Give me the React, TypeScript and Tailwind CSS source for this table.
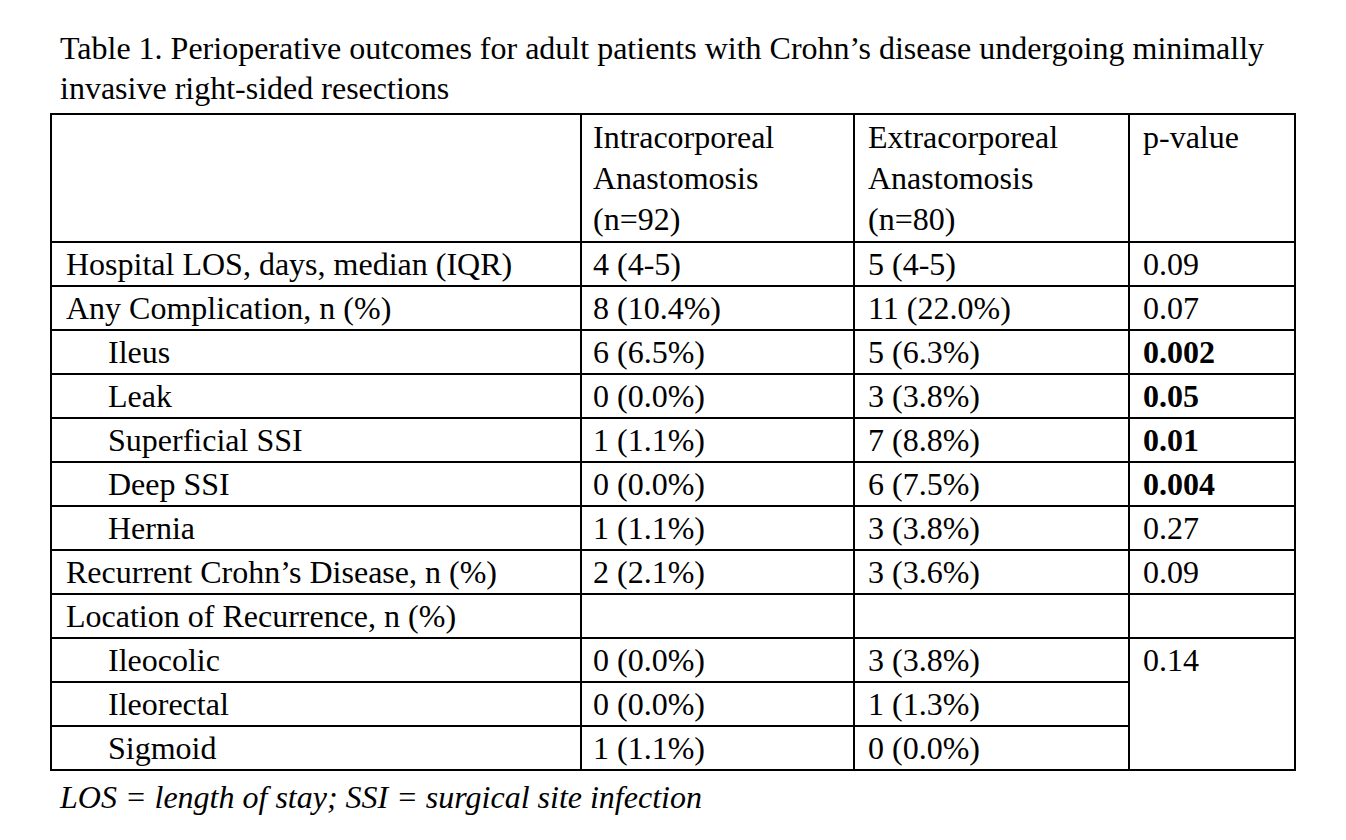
import React from "react";

type Row = {
  label: string;
  indent?: boolean;
  a: string;
  b: string;
  p?: string;
  bold?: boolean;
  pRowSpan?: number;
  skipP?: boolean;
};

const rows: Row[] = [
  { label: "Hospital LOS, days, median (IQR)", a: "4 (4-5)", b: "5 (4-5)", p: "0.09" },
  { label: "Any Complication, n (%)", a: "8 (10.4%)", b: "11 (22.0%)", p: "0.07" },
  { label: "Ileus", indent: true, a: "6 (6.5%)", b: "5 (6.3%)", p: "0.002", bold: true },
  { label: "Leak", indent: true, a: "0 (0.0%)", b: "3 (3.8%)", p: "0.05", bold: true },
  { label: "Superficial SSI", indent: true, a: "1 (1.1%)", b: "7 (8.8%)", p: "0.01", bold: true },
  { label: "Deep SSI", indent: true, a: "0 (0.0%)", b: "6 (7.5%)", p: "0.004", bold: true },
  { label: "Hernia", indent: true, a: "1 (1.1%)", b: "3 (3.8%)", p: "0.27" },
  { label: "Recurrent Crohn’s Disease, n (%)", a: "2 (2.1%)", b: "3 (3.6%)", p: "0.09" },
  { label: "Location of Recurrence, n (%)", a: "", b: "", p: "" },
  { label: "Ileocolic", indent: true, a: "0 (0.0%)", b: "3 (3.8%)", p: "0.14", pRowSpan: 3 },
  { label: "Ileorectal", indent: true, a: "0 (0.0%)", b: "1 (1.3%)", skipP: true },
  { label: "Sigmoid", indent: true, a: "1 (1.1%)", b: "0 (0.0%)", skipP: true },
];

export default function App() {
  return (
    <div
      className="min-h-[840px] w-[1346px] bg-white text-black text-[32px]"
      style={{ fontFamily: '"Liberation Serif", "Times New Roman", serif' }}
    >
      <div className="pl-[60px] pt-[28px] leading-[40px]">
        <p>Table 1. Perioperative outcomes for adult patients with Crohn’s disease undergoing minimally</p>
        <p>invasive right-sided resections</p>
      </div>
      <table className="ml-[50px] mt-[5px] w-[1244px] table-fixed border-collapse border-2 border-black">
        <colgroup>
          <col className="w-[530px]" />
          <col className="w-[273px]" />
          <col className="w-[275px]" />
          <col className="w-[166px]" />
        </colgroup>
        <tbody>
          <tr className="h-[128px] align-top leading-[41px]">
            <td className="border-2 border-black"></td>
            <td className="border-2 border-black pl-[11px] pt-[2px]">
              Intracorporeal<br />Anastomosis<br />(n=92)
            </td>
            <td className="border-2 border-black pl-[13px] pt-[2px]">
              Extracorporeal<br />Anastomosis<br />(n=80)
            </td>
            <td className="border-2 border-black pl-[13px] pt-[2px]">p-value</td>
          </tr>
          {rows.map((r, i) => (
            <tr key={i} className="h-[44px] leading-[42px]">
              <td className={`border-2 border-black p-0 align-top ${r.indent ? "pl-[56px]" : "pl-[14px]"}`}>
                {r.label}
              </td>
              <td className="border-2 border-black p-0 pl-[11px] align-top">{r.a}</td>
              <td className="border-2 border-black p-0 pl-[13px] align-top">{r.b}</td>
              {!r.skipP && (
                <td
                  rowSpan={r.pRowSpan}
                  className={`border-2 border-black p-0 pl-[13px] align-top ${r.bold ? "font-bold" : ""}`}
                >
                  {r.p}
                </td>
              )}
            </tr>
          ))}
        </tbody>
      </table>
      <p className="pl-[60px] pt-[6px] italic leading-[40px]">LOS = length of stay; SSI = surgical site infection</p>
    </div>
  );
}
